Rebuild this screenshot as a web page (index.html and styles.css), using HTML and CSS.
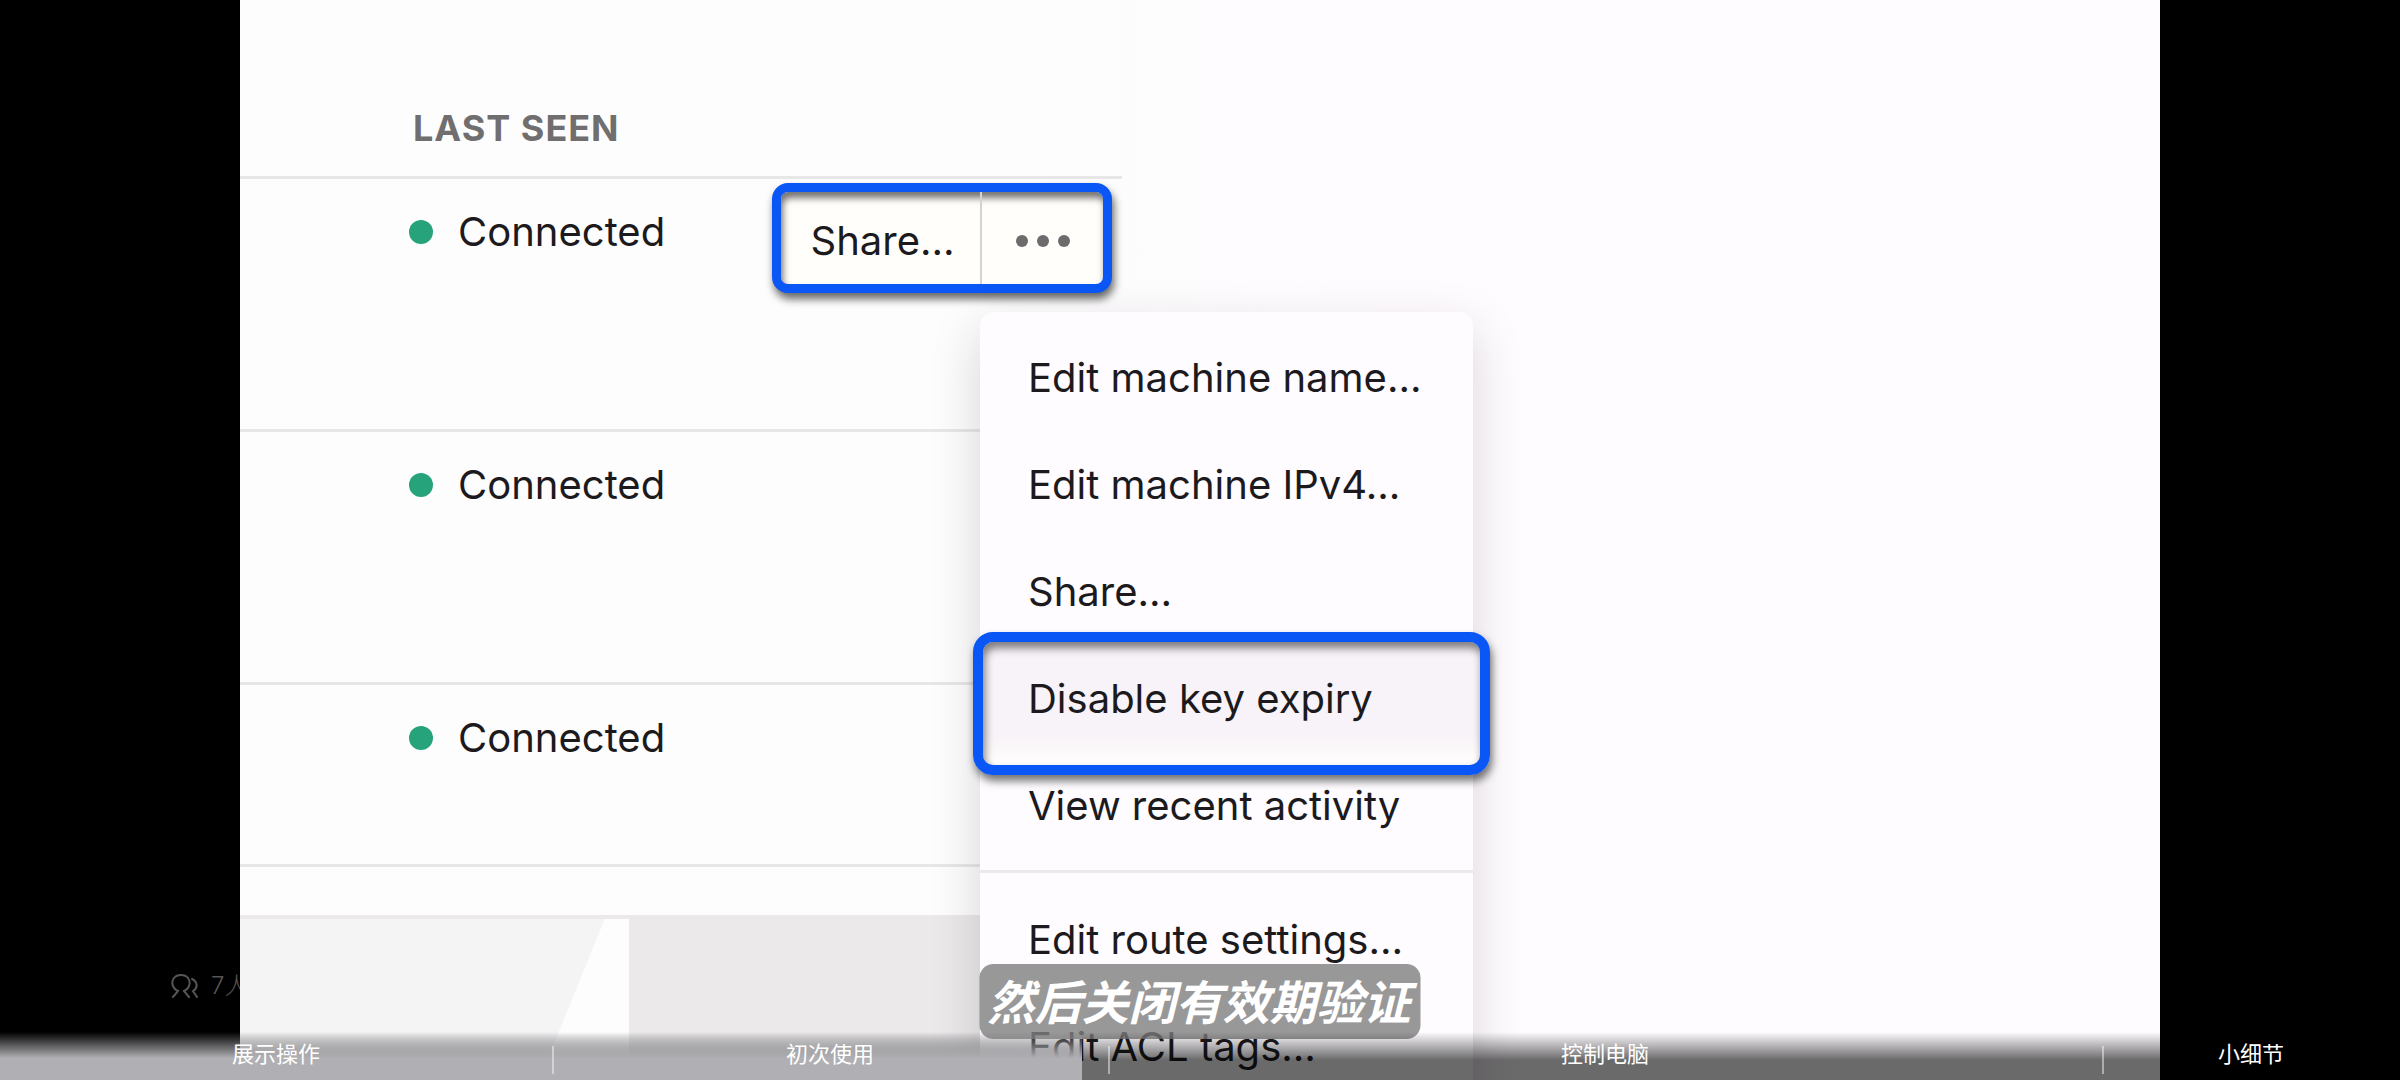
FILE: index.html
```
<!DOCTYPE html>
<html lang="zh">
<head>
  <meta charset="UTF-8">
  <title>Machines</title>
  <meta name="viewport" content="width=device-width, initial-scale=1.0">
  <link rel="stylesheet" href="styles.css">
</head>
<body>
  <div class="player">
    <aside class="side">
      <div class="viewers">
        <svg viewBox="0 0 28 24" width="28" height="24" fill="none" stroke="currentColor" stroke-width="2" stroke-linecap="round">
          <path d="M2 23 L7 17 C1 14 0 8 3 4 C6 0 14 0 17 4 C20 8 19 14 13 17 L18 23"/>
          <path d="M21 5 C27 8 27 14 22 17 L26 23"/>
        </svg>
        <span>7人</span>
      </div>
    </aside>

    <main class="stage">
      <table class="machines">
        <thead>
          <tr><th>LAST SEEN</th><th class="actions"></th></tr>
        </thead>
        <tbody>
          <tr>
            <td><span class="status">Connected</span></td>
            <td class="actions">
              <div class="action-wrap">
                <div class="action-group">
                  <button class="share">Share…</button>
                  <button class="more" aria-label="More">
                    <svg viewBox="0 0 56 12" width="56" height="12" fill="#6d6b6c">
                      <circle cx="7" cy="6" r="6"/><circle cx="28" cy="6" r="6"/><circle cx="49" cy="6" r="6"/>
                    </svg>
                  </button>
                </div>
                <div class="menu">
                  <button>Edit machine name…</button>
                  <button>Edit machine IPv4…</button>
                  <button>Share…</button>
                  <button class="active">Disable key expiry</button>
                  <button>View recent activity</button>
                  <hr>
                  <button>Edit route settings…</button>
                  <button>Edit ACL tags…</button>
                </div>
              </div>
            </td>
          </tr>
          <tr>
            <td><span class="status">Connected</span></td>
            <td></td>
          </tr>
          <tr class="last">
            <td><span class="status">Connected</span></td>
            <td></td>
          </tr>
        </tbody>
      </table>
      <div class="bottom"><div class="sheet"><div class="slope"></div></div></div>
    </main>

    <aside class="side"></aside>

    <p class="subtitle">然后关闭有效期验证</p>

    <div class="progress">
      <div class="played"></div>
      <nav class="chapters">
        <a href="#c1">展示操作</a>
        <a href="#c2">初次使用</a>
        <a href="#c3">控制电脑</a>
        <a href="#c4">小细节</a>
      </nav>
    </div>
  </div>
</body>
</html>
```
FILE: styles.css
```
* { box-sizing: border-box; }

body {
  margin: 0;
  background: #000;
  font-family: Inter, "Noto Sans CJK SC", sans-serif;
  color: #1c1a1d;
}

button {
  font: inherit;
  color: inherit;
  background: none;
  border: none;
  padding: 0;
  cursor: pointer;
}

.player {
  position: relative;
  display: flex;
  height: 100vh;
  overflow: hidden;
}

/* black bars left and right */
.side {
  flex: 0 0 10%;
  overflow: hidden;
  display: flex;
  flex-direction: column;
  justify-content: flex-end;
}

.viewers {
  display: flex;
  align-items: center;
  gap: 12px;
  padding: 0 0 76px 171px;
  color: #555;
  font-size: 24px;
  font-weight: 300;
  line-height: 36px;
  white-space: nowrap;
}
.viewers svg { flex: none; }

.stage {
  flex: 1;
  min-width: 0;
  overflow: hidden;
  display: flex;
  flex-direction: column;
  background: linear-gradient(90deg, #fdfdfd 40%, #fffcff 60%);
}

.machines {
  width: 882px;
  border-collapse: collapse;
  font-size: 40px;
  line-height: 48px;
}

.machines th {
  height: 177px;
  padding: 0 0 24px 173px;
  text-align: left;
  vertical-align: bottom;
  font-size: 36px;
  font-weight: 700;
  letter-spacing: 1px;
  color: #706e6f;
  border-bottom: 3px solid #e8e7e8;
}

.machines td {
  height: 253px;
  padding: 29px 0 0 169px;
  vertical-align: top;
  border-bottom: 3px solid #e8e7e8;
}
.machines .last td { height: 182px; }
.machines .actions { width: 350px; padding: 4px 10px 0 0; }

.status {
  display: flex;
  align-items: center;
  gap: 25px;
}
.status::before {
  content: "";
  width: 24px;
  height: 24px;
  border-radius: 50%;
  background: #26a37a;
}

.action-wrap { position: relative; }

.action-group {
  display: flex;
  height: 110px;
  border: 9px solid #0b57f5;
  border-radius: 16px;
  background: #fffefb;
  box-shadow: 2px 6px 8px rgba(0,0,0,.6), inset 2px 6px 7px rgba(0,0,0,.55);
}
.share { flex: 1; padding: 6px 0 0 4px; border-right: 2px solid #d4d2d3; }
.more { width: 121px; padding-top: 6px; display: flex; align-items: center; justify-content: center; }

.menu {
  position: absolute;
  z-index: 2;
  top: 129px;
  left: 208px;
  width: 493px;
  padding: 13px 0;
  border-radius: 14px;
  background: #fefcff;
  box-shadow: 0 18px 50px rgba(40,30,40,.18);
}
.menu button {
  position: relative;
  display: block;
  width: 100%;
  height: 107px;
  padding-left: 48px;
  text-align: left;
  white-space: nowrap;
}
.menu hr {
  margin: 10px 0 14px;
  border: none;
  border-top: 3px solid #ebe9eb;
}

/* frame round the chosen item */
.menu .active::before {
  content: "";
  position: absolute;
  z-index: -1;
  inset: -14px -17px -22px -7px;
  border: 10px solid #0b57f5;
  border-radius: 20px;
  background: linear-gradient(#f7f3f8 75%, #fefcfc 95%);
  box-shadow: 2px 6px 8px rgba(0,0,0,.55), inset 2px 6px 8px rgba(0,0,0,.5);
}
.menu .active { z-index: 1; }

.bottom {
  flex: 1;
  width: 741px;
  margin-top: 48px;
  padding-top: 4px;
  background: #ebe9ea;
}
.sheet { width: 389px; height: 100%; background: #fefdfe; }
.slope {
  width: 365px;
  height: 100%;
  background: #f5f4f5;
  clip-path: polygon(0 0, 100% 0, 82% 100%, 0 100%);
}

.subtitle {
  position: absolute;
  z-index: 3;
  left: 50%;
  bottom: 41px;
  transform: translateX(-50%);
  margin: 0;
  padding: 0 10px 4px 8px;
  border-radius: 14px;
  background: rgba(128,126,128,.8);
  color: #fff;
  font-family: "Noto Sans CJK SC", sans-serif;
  font-size: 47px;
  line-height: 71px;
  font-weight: 700;
  font-style: italic;
  white-space: nowrap;
}

.progress {
  position: absolute;
  z-index: 4;
  left: 0;
  right: 0;
  bottom: 0;
  height: 48px;
  background: linear-gradient(rgba(0,0,0,0), rgba(0,0,0,.58) 28px);
}
.played {
  width: 45.1%;
  height: 100%;
  background: linear-gradient(rgba(176,175,179,0), #b0afb3 26px);
}

.chapters {
  position: absolute;
  inset: 0;
  display: grid;
  grid-template-columns: 552fr 556fr 994fr 298fr;
}
.chapters a {
  position: relative;
  color: #fff;
  font-family: "Noto Sans CJK SC", sans-serif;
  font-size: 22px;
  line-height: 40px;
  text-align: center;
  text-decoration: none;
}
.chapters a + a::before {
  content: "";
  position: absolute;
  left: 0;
  top: 14px;
  width: 2px;
  height: 28px;
  background: rgba(255,255,255,.45);
}
```
